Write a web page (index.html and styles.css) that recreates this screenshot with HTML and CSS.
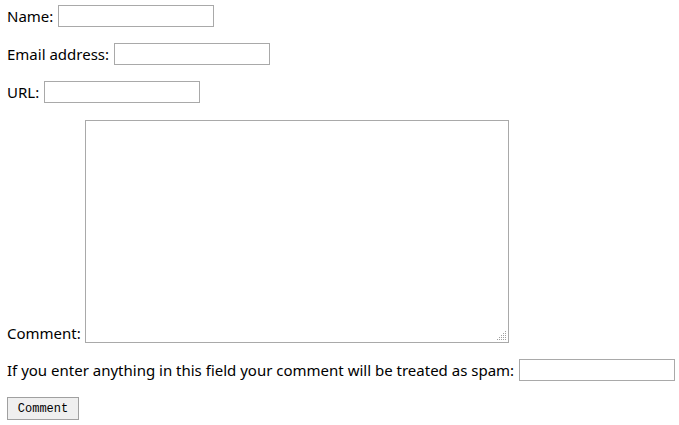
FILE: index.html
```html
<!DOCTYPE html>
<html>
<head>
<meta charset="utf-8">
<link rel="stylesheet" href="styles.css">
</head>
<body>
<form class="comment-form">
  <p class="row"><label>Name: <input type="text" class="field"></label></p>
  <p class="row"><label>Email address: <input type="text" class="field"></label></p>
  <p class="row"><label>URL: <input type="text" class="field"></label></p>
  <p class="row row-comment"><label>Comment: <textarea class="area"></textarea></label></p>
  <p class="row"><label>If you enter anything in this field your comment will be treated as spam: <input type="text" class="field"></label></p>
  <p class="row"><button type="submit" class="btn">Comment</button></p>
</form>
</body>
</html>
```
FILE: styles.css
```css
html, body {
  background: #ffffff;
}
body {
  margin: 0;
  padding: 5px 0 0 7px;
  font-family: "Noto Sans", sans-serif;
  font-size: 15px;
  color: #000;
}
.comment-form {
  margin: 0;
}
.row {
  margin: 0 0 16px;
  line-height: 22px;
  white-space: nowrap;
}
.row-comment {
  margin-bottom: 15px;
}
.field {
  box-sizing: border-box;
  width: 156px;
  height: 22px;
  border: 1px solid #a9a9a9;
  padding: 0 2px;
  margin: 0 0 0 1px;
  font: inherit;
  vertical-align: baseline;
}
.area {
  box-sizing: border-box;
  width: 424px;
  height: 223px;
  border: 1px solid #a9a9a9;
  margin: 1px 0 0;
  padding: 2px;
  font: inherit;
  vertical-align: text-bottom;
  resize: none;
  background-color: #fff;
  background-image: url("data:image/svg+xml,%3Csvg xmlns='http://www.w3.org/2000/svg' width='9' height='9'%3E%3Cg fill='%23a0a0a0'%3E%3Crect x='8' y='0' width='1' height='1'/%3E%3Crect x='6' y='2' width='1' height='1'/%3E%3Crect x='8' y='2' width='1' height='1'/%3E%3Crect x='4' y='4' width='1' height='1'/%3E%3Crect x='6' y='4' width='1' height='1'/%3E%3Crect x='8' y='4' width='1' height='1'/%3E%3Crect x='2' y='6' width='1' height='1'/%3E%3Crect x='4' y='6' width='1' height='1'/%3E%3Crect x='6' y='6' width='1' height='1'/%3E%3Crect x='8' y='6' width='1' height='1'/%3E%3Crect x='0' y='8' width='1' height='1'/%3E%3Crect x='2' y='8' width='1' height='1'/%3E%3Crect x='4' y='8' width='1' height='1'/%3E%3Crect x='6' y='8' width='1' height='1'/%3E%3Crect x='8' y='8' width='1' height='1'/%3E%3C/g%3E%3C/svg%3E");
  background-repeat: no-repeat;
  background-position: right 2px bottom 2px;
}
.btn {
  box-sizing: border-box;
  width: 72px;
  height: 23px;
  border: 1px solid #a0a0a0;
  background: #efefef;
  font-family: "Liberation Mono", monospace;
  font-size: 12px;
  padding: 0;
  margin: 0;
  color: #000;
  vertical-align: top;
}
```
